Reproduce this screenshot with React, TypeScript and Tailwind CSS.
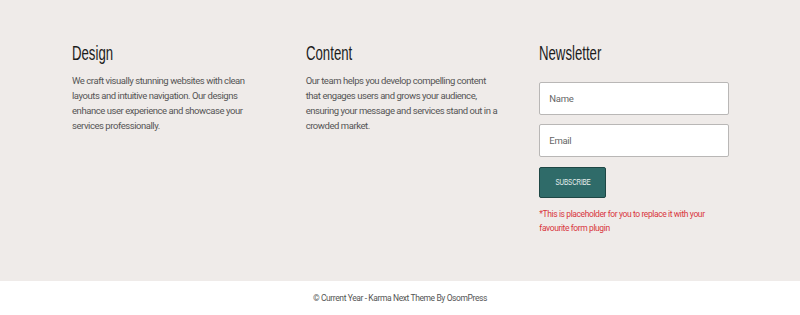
const heading = "inline-block origin-left scale-x-[0.66] text-[20px] leading-[20px] text-[#1c1c1c] font-['Liberation_Sans',sans-serif]";
const body = "text-[9.5px] leading-[15px] tracking-[-0.45px] text-[#555] whitespace-nowrap font-['Roboto','Liberation_Sans',sans-serif]";
const field = "h-[33px] w-full bg-white border border-[#b9b7b6] rounded-[2px] px-[9px] text-[9.5px] tracking-[-0.3px] placeholder:text-[#666] outline-none";

function Heading({ children }: { children: string }) {
  return (
    <h2 className="h-[20px] leading-[20px] text-[20px] whitespace-nowrap">
      <span className={heading}>{children}</span>
    </h2>
  );
}

export default function App() {
  return (
    <div className="w-[800px] h-[315px] flex flex-col bg-[#efebe9] font-['Roboto',sans-serif]">
      <div className="flex-1 pt-[43px] px-[72px]">
        <div className="grid grid-cols-3 gap-[44px] w-[657px]">
          <div>
            <Heading>Design</Heading>
            <p className={`${body} mt-[10px]`}>
              We craft visually stunning websites with clean
              <br />
              layouts and intuitive navigation. Our designs
              <br />
              enhance user experience and showcase your
              <br />
              services professionally.
            </p>
          </div>
          <div>
            <Heading>Content</Heading>
            <p className={`${body} mt-[10px]`}>
              Our team helps you develop compelling content
              <br />
              that engages users and grows your audience,
              <br />
              ensuring your message and services stand out in a
              <br />
              crowded market.
            </p>
          </div>
          <div>
            <Heading>Newsletter</Heading>
            <div className="mt-[19px] flex flex-col gap-[9px]">
              <input placeholder="Name" className={field} />
              <input placeholder="Email" className={field} />
              <button className="mt-[1px] h-[31px] w-[67px] bg-[#2f6b69] border border-[#1e4745] rounded-[2px] text-[#e8f0ef] flex items-center justify-center">
                <span className="inline-block scale-x-[0.7] text-[9px] tracking-[-0.2px] font-['Liberation_Sans',sans-serif]">
                  SUBSCRIBE
                </span>
              </button>
            </div>
            <p className="mt-[10px] text-[8.5px] leading-[13.5px] tracking-[-0.4px] text-[#d9363e]">
              *This is placeholder for you to replace it with your favourite form plugin
            </p>
          </div>
        </div>
      </div>
      <footer className="h-[34px] bg-white flex items-center justify-center text-[8.5px] tracking-[-0.4px] text-[#555]">
        © Current Year - Karma Next Theme By OsomPress
      </footer>
    </div>
  );
}
